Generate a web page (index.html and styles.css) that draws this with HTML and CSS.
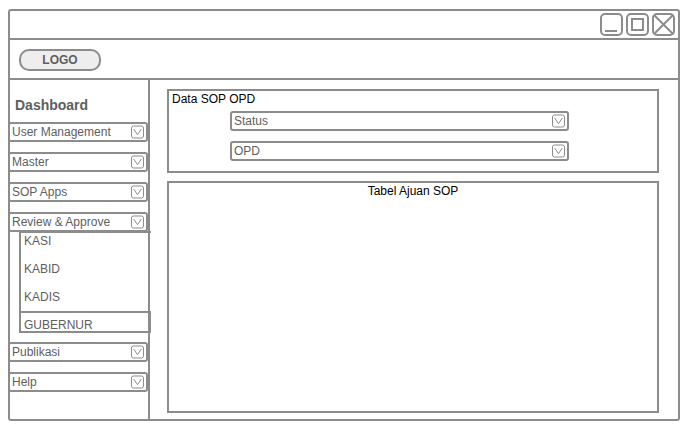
FILE: index.html
```html
<!DOCTYPE html>
<html lang="id">
<head>
<meta charset="utf-8">
<meta name="viewport" content="width=device-width, initial-scale=1">
<title>Dashboard SOP</title>
<link rel="stylesheet" href="styles.css">
</head>
<body>
<svg class="defs" aria-hidden="true">
  <symbol id="drop" viewBox="0 0 14 14">
    <rect x="0.5" y="1" width="12" height="12" rx="2"/>
    <path d="M2.7 4L6.5 9.7L10.3 4"/>
  </symbol>
</svg>
<div class="window">
  <div class="titlebar">
    <button class="control" aria-label="Minimize"><svg viewBox="0 0 23 23"><rect x="1" y="1" width="21" height="21" rx="4"/><path d="M5 18H17"/></svg></button>
    <button class="control" aria-label="Maximize"><svg viewBox="0 0 23 23"><rect x="1" y="1" width="21" height="21" rx="4"/><rect x="6" y="6" width="11" height="11"/></svg></button>
    <button class="control" aria-label="Close"><svg viewBox="0 0 23 23"><rect x="1" y="1" width="21" height="21" rx="4"/><path d="M2 2L21 21M21 2L2 21"/></svg></button>
  </div>
  <header class="header"><a class="logo" href="#">LOGO</a></header>
  <div class="body">
    <nav class="sidebar">
      <h1 class="heading">Dashboard</h1>
      <button class="item">User Management<svg class="drop"><use href="#drop"/></svg></button>
      <button class="item">Master<svg class="drop"><use href="#drop"/></svg></button>
      <button class="item">SOP Apps<svg class="drop"><use href="#drop"/></svg></button>
      <div class="group">
        <button class="item" aria-expanded="true">Review &amp; Approve<svg class="drop"><use href="#drop"/></svg></button>
        <ul class="submenu">
          <li><a href="#">KASI</a></li>
          <li><a href="#">KABID</a></li>
          <li><a href="#">KADIS</a></li>
          <li class="selected"><a href="#">GUBERNUR</a></li>
        </ul>
      </div>
      <button class="item">Publikasi<svg class="drop"><use href="#drop"/></svg></button>
      <button class="item">Help<svg class="drop"><use href="#drop"/></svg></button>
    </nav>
    <main class="main">
      <section class="panel">
        <h2 class="title">Data SOP OPD</h2>
        <div class="fields">
          <div class="field"><select class="select" aria-label="Status"><option>Status</option></select><svg class="drop"><use href="#drop"/></svg></div>
          <div class="field"><select class="select" aria-label="OPD"><option>OPD</option></select><svg class="drop"><use href="#drop"/></svg></div>
        </div>
      </section>
      <section class="panel table-panel">
        <h2 class="title">Tabel Ajuan SOP</h2>
      </section>
    </main>
  </div>
</div>
</body>
</html>
```
FILE: styles.css
```css
:root {
  --line: #8c8c8c;
  --text: #5e5e5e;
}

* {
  box-sizing: border-box;
}

body {
  margin: 0;
  min-height: 100vh;
  padding: 9px 19px 19px 8px;
  display: flex;
  background: #fff;
  color: var(--text);
  font: 12px/16px "Liberation Sans", Arial, sans-serif;
}

button,
select {
  font: inherit;
  color: inherit;
}

a {
  color: inherit;
  text-decoration: none;
}

.defs {
  position: absolute;
  width: 0;
  height: 0;
}

.window {
  flex: 1;
  display: flex;
  flex-direction: column;
  border: 2px solid var(--line);
  border-radius: 3px;
}

.titlebar {
  display: flex;
  justify-content: flex-end;
  gap: 3px;
  padding: 2px 3px;
  border-bottom: 2px solid var(--line);
}

.control {
  width: 23px;
  height: 23px;
  padding: 0;
  border: 0;
  background: none;
}

.control svg {
  display: block;
  fill: none;
  stroke: var(--line);
  stroke-width: 2;
}

.header {
  display: flex;
  padding: 9px 9px 7px;
  border-bottom: 2px solid var(--line);
}

.logo {
  width: 82px;
  height: 22px;
  padding: 1px 0;
  border: 2px solid var(--line);
  border-radius: 10px;
  background: #eee;
  text-align: center;
  font-weight: bold;
}

.body {
  flex: 1;
  display: flex;
}

.sidebar {
  flex: 0 0 140px;
  display: flex;
  flex-direction: column;
  gap: 10px;
  padding-top: 18px;
  border-right: 2px solid var(--line);
}

.heading {
  margin: 0 0 0 5px;
  font-size: 14px;
  line-height: 14px;
}

.item {
  display: flex;
  align-items: center;
  justify-content: space-between;
  width: 140px;
  height: 20px;
  margin-left: -2px;
  padding: 0 1px 0 2px;
  border: 2px solid var(--line);
  border-radius: 3px;
  background: #fff;
  text-align: left;
}

.drop {
  width: 14px;
  height: 14px;
  fill: none;
  stroke: var(--line);
  stroke-width: 1;
}

.submenu {
  margin: -1px -3px -1px 9px;
  padding: 0;
  list-style: none;
  border: solid var(--line);
  border-width: 2px 0 0 2px;
}

.submenu li {
  height: 28px;
  padding-left: 3px;
}

.submenu li:nth-child(3) {
  height: 22px;
}

.submenu .selected {
  height: 22px;
  padding-top: 4px;
  border: solid var(--line);
  border-width: 2px 2px 2px 0;
}

.main {
  flex: 1;
  display: flex;
  flex-direction: column;
  gap: 8px;
  padding: 9px 19px 6px 17px;
}

.panel {
  min-height: 84px;
  border: 2px solid var(--line);
}

.table-panel {
  flex: 1;
  text-align: center;
}

.title {
  margin: 0 3px;
  color: #000;
  font-size: 12px;
  font-weight: normal;
}

.fields {
  display: flex;
  flex-direction: column;
  gap: 10px;
  margin: 4px 88px 0 61px;
}

.field {
  position: relative;
  height: 20px;
}

.select {
  display: block;
  width: 100%;
  height: 20px;
  padding: 0 20px 0 2px;
  border: 2px solid var(--line);
  border-radius: 3px;
  background: #fff;
  appearance: none;
}

.field .drop {
  position: absolute;
  top: 3px;
  right: 3px;
  pointer-events: none;
}
```
